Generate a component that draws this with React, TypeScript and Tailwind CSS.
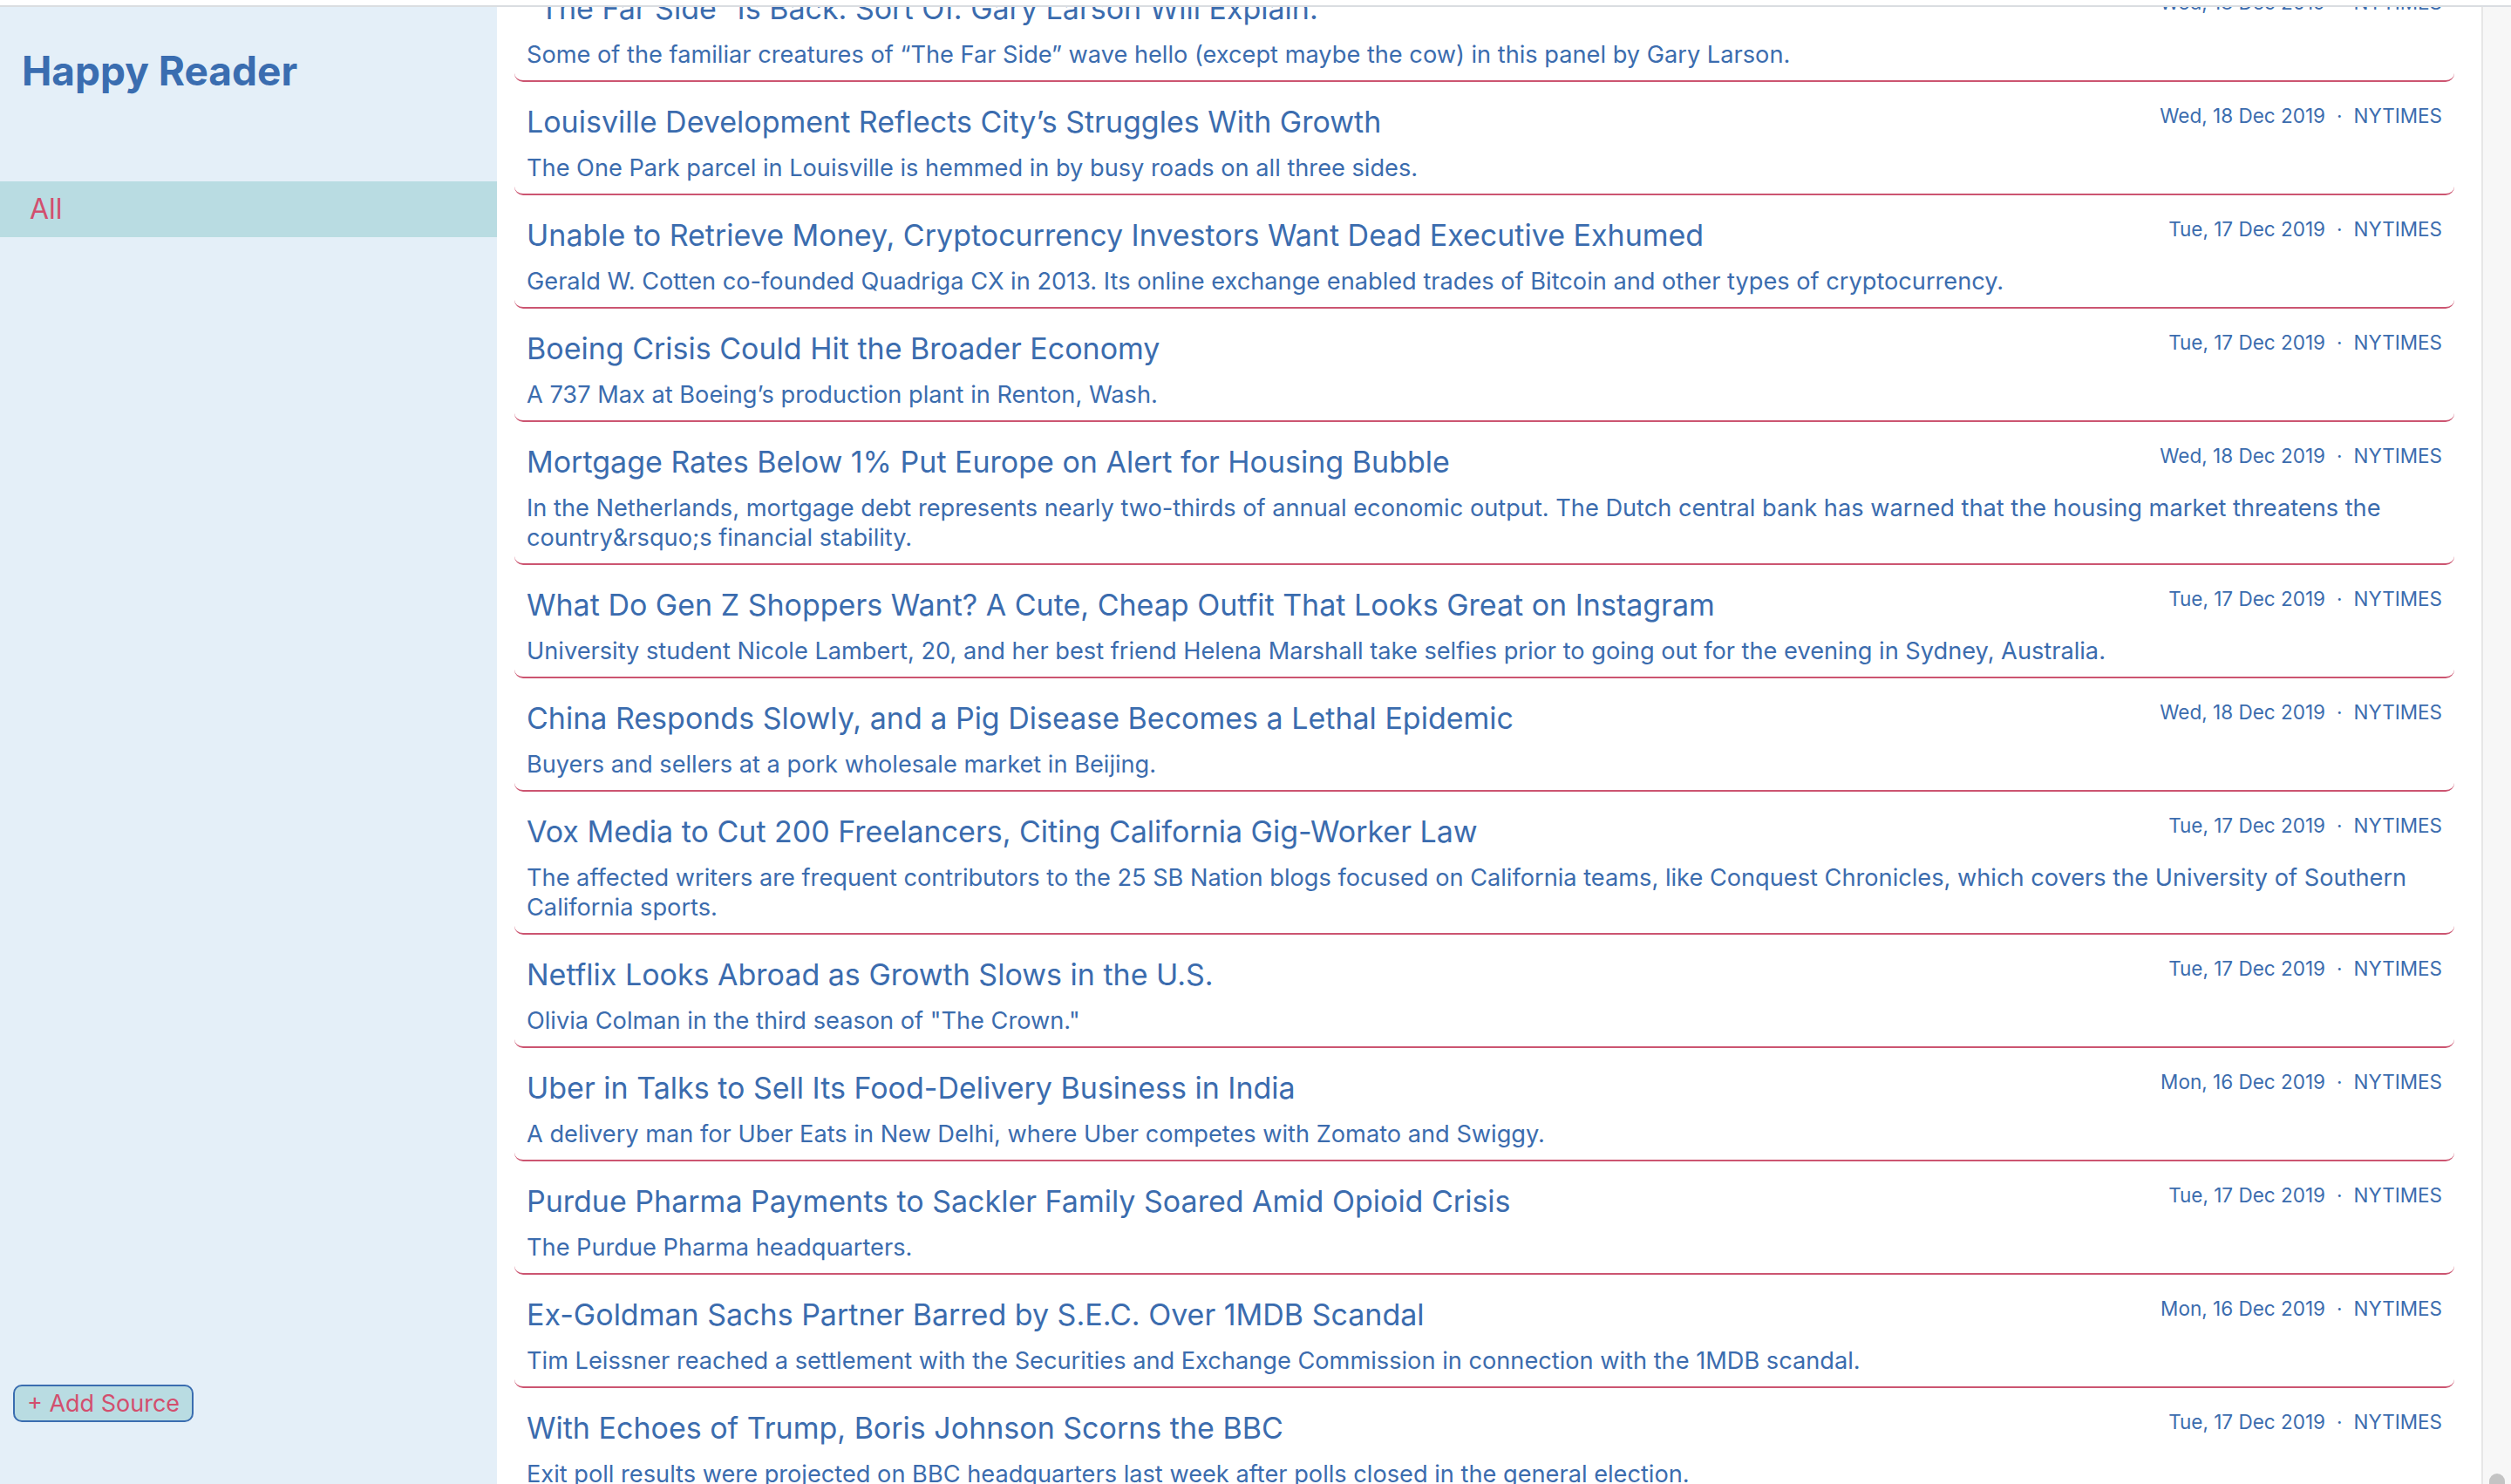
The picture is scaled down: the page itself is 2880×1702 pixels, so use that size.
import React from "react";

interface Article {
  title: string;
  date: string;
  source: string;
  summary: string;
}

const articles: Article[] = [
  {
    title: "“The Far Side” Is Back. Sort Of. Gary Larson Will Explain.",
    date: "Wed, 18 Dec 2019",
    source: "NYTIMES",
    summary:
      "Some of the familiar creatures of “The Far Side” wave hello (except maybe the cow) in this panel by Gary Larson.",
  },
  {
    title: "Louisville Development Reflects City’s Struggles With Growth",
    date: "Wed, 18 Dec 2019",
    source: "NYTIMES",
    summary: "The One Park parcel in Louisville is hemmed in by busy roads on all three sides.",
  },
  {
    title: "Unable to Retrieve Money, Cryptocurrency Investors Want Dead Executive Exhumed",
    date: "Tue, 17 Dec 2019",
    source: "NYTIMES",
    summary:
      "Gerald W. Cotten co-founded Quadriga CX in 2013. Its online exchange enabled trades of Bitcoin and other types of cryptocurrency.",
  },
  {
    title: "Boeing Crisis Could Hit the Broader Economy",
    date: "Tue, 17 Dec 2019",
    source: "NYTIMES",
    summary: "A 737 Max at Boeing’s production plant in Renton, Wash.",
  },
  {
    title: "Mortgage Rates Below 1% Put Europe on Alert for Housing Bubble",
    date: "Wed, 18 Dec 2019",
    source: "NYTIMES",
    summary:
      "In the Netherlands, mortgage debt represents nearly two-thirds of annual economic output. The Dutch central bank has warned that the housing market threatens the country&rsquo;s financial stability.",
  },
  {
    title: "What Do Gen Z Shoppers Want? A Cute, Cheap Outfit That Looks Great on Instagram",
    date: "Tue, 17 Dec 2019",
    source: "NYTIMES",
    summary:
      "University student Nicole Lambert, 20, and her best friend Helena Marshall take selfies prior to going out for the evening in Sydney, Australia.",
  },
  {
    title: "China Responds Slowly, and a Pig Disease Becomes a Lethal Epidemic",
    date: "Wed, 18 Dec 2019",
    source: "NYTIMES",
    summary: "Buyers and sellers at a pork wholesale market in Beijing.",
  },
  {
    title: "Vox Media to Cut 200 Freelancers, Citing California Gig-Worker Law",
    date: "Tue, 17 Dec 2019",
    source: "NYTIMES",
    summary:
      "The affected writers are frequent contributors to the 25 SB Nation blogs focused on California teams, like Conquest Chronicles, which covers the University of Southern California sports.",
  },
  {
    title: "Netflix Looks Abroad as Growth Slows in the U.S.",
    date: "Tue, 17 Dec 2019",
    source: "NYTIMES",
    summary: "Olivia Colman in the third season of \"The Crown.\"",
  },
  {
    title: "Uber in Talks to Sell Its Food-Delivery Business in India",
    date: "Mon, 16 Dec 2019",
    source: "NYTIMES",
    summary: "A delivery man for Uber Eats in New Delhi, where Uber competes with Zomato and Swiggy.",
  },
  {
    title: "Purdue Pharma Payments to Sackler Family Soared Amid Opioid Crisis",
    date: "Tue, 17 Dec 2019",
    source: "NYTIMES",
    summary: "The Purdue Pharma headquarters.",
  },
  {
    title: "Ex-Goldman Sachs Partner Barred by S.E.C. Over 1MDB Scandal",
    date: "Mon, 16 Dec 2019",
    source: "NYTIMES",
    summary:
      "Tim Leissner reached a settlement with the Securities and Exchange Commission in connection with the 1MDB scandal.",
  },
  {
    title: "With Echoes of Trump, Boris Johnson Scorns the BBC",
    date: "Tue, 17 Dec 2019",
    source: "NYTIMES",
    summary:
      "Exit poll results were projected on BBC headquarters last week after polls closed in the general election.",
  },
];

function ArticleRow({ article }: { article: Article }) {
  return (
    <article className="rounded-[10px] border-b-2 border-[#cc5571] px-[14px] pt-[24px] pb-[12px]">
      <div className="flex items-start justify-between gap-6">
        <h2 className="text-[34px] leading-[44px] font-normal text-[#3b6cae]">{article.title}</h2>
        <div className="flex shrink-0 items-center pt-[1px] text-[22.5px] leading-[28px] text-[#3b6cae]">
          <span>{article.date}</span>
          <span className="px-[13px]">·</span>
          <span>{article.source}</span>
        </div>
      </div>
      <p className="mt-[14px] text-[27.2px] leading-[34px] text-[#3b6cae]">{article.summary}</p>
    </article>
  );
}

export default function App() {
  return (
    <div className="flex h-[1702px] flex-col overflow-hidden bg-white font-['Inter','Liberation_Sans',sans-serif]">
      <div className="h-[6px] bg-white" />
      <div className="h-[2px] bg-[#dadde1]" />
      <div className="flex min-h-0 flex-1">
        <aside className="flex w-[570px] shrink-0 flex-col bg-[#e4eff8]">
          <h1 className="pt-[44px] pl-[25px] text-[46px] leading-[58px] font-bold text-[#3a6db0]">
            Happy Reader
          </h1>
          <div className="mt-[98px] h-[64px] bg-[#b9dce2] pl-[34px] text-[32px] leading-[64px] text-[#d24f6e]">
            All
          </div>
          <div className="mt-auto pb-[71px] pl-[15px]">
            <button className="h-[43px] rounded-[10px] border-2 border-[#3a6db0] bg-[#b9dce2] px-[14px] text-[27px] leading-[38px] text-[#d24f6e]">
              + Add Source
            </button>
          </div>
        </aside>
        <main className="min-w-0 flex-1 overflow-hidden pl-[20px] pr-[31px]">
          <div className="-mt-[44px]">
            {articles.map((a) => (
              <ArticleRow key={a.title} article={a} />
            ))}
          </div>
        </main>
        <div className="flex w-[34px] shrink-0 flex-col justify-end border-l-2 border-[#e6e6e6] bg-[#f7f7f7]">
          <div className="mx-auto h-[12px] w-[18px] rounded-t-full bg-[#c4c4c4]" />
        </div>
      </div>
    </div>
  );
}
